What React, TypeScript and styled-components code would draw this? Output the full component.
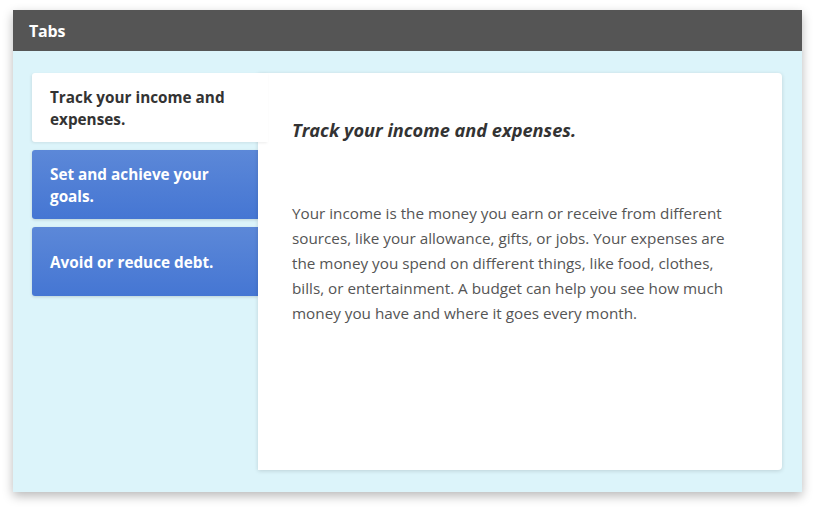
import React, { useState } from "react";
import styled, { createGlobalStyle, css } from "styled-components";

const Global = createGlobalStyle`
  html, body { margin: 0; padding: 0; background: #ffffff; }
  body { font-family: "Open Sans", "Liberation Sans", sans-serif; }
  * { box-sizing: border-box; }
`;

const Page = styled.div`
  padding: 10px 13px 17px 13px;
`;

const Window = styled.div`
  width: 789px;
  height: 482px;
  display: flex;
  flex-direction: column;
  box-shadow: 0 4px 10px rgba(0, 0, 0, 0.28);
`;

const Header = styled.div`
  height: 41px;
  flex: 0 0 41px;
  background: #555555;
  color: #ffffff;
  font-weight: 700;
  font-size: 16px;
  display: flex;
  align-items: center;
  padding-left: 16px;
  letter-spacing: -0.2px;
`;

const Body = styled.div`
  flex: 1;
  background: #dcf4fa;
  padding: 22px 20px 22px 19px;
  display: flex;
`;

const TabList = styled.div`
  width: 226px;
  flex: 0 0 226px;
  display: flex;
  flex-direction: column;
  gap: 8px;
`;

const Tab = styled.button<{ $active: boolean }>`
  height: 69px;
  border: none;
  border-radius: 3px 0 0 3px;
  text-align: left;
  padding: 0 14px 0 18px;
  font-family: "Open Sans", "Liberation Sans", sans-serif;
  font-weight: 700;
  font-size: 15.3px;
  line-height: 22px;
  letter-spacing: 0;
  cursor: pointer;
  display: flex;
  align-items: center;
  ${(p) =>
    p.$active
      ? css`
          background: #ffffff;
          color: #333333;
          width: 236px;
          position: relative;
          z-index: 2;
          box-shadow: -1px 1px 3px rgba(0, 0, 0, 0.08);
        `
      : css`
          background: linear-gradient(#5c88d8, #4576d3);
          color: #ffffff;
          box-shadow: 0 1px 3px rgba(0, 0, 0, 0.15);
        `}
`;

const Panel = styled.div`
  flex: 1;
  background: #ffffff;
  border-radius: 0 4px 4px 0;
  box-shadow: 0 1px 4px rgba(0, 0, 0, 0.14);
  padding: 43px 50px 0 34px;
  position: relative;
  z-index: 1;
`;

const Title = styled.h2`
  margin: 0 0 57px 0;
  font-size: 18.2px;
  line-height: 28px;
  font-style: italic;
  font-weight: 700;
  color: #333333;
  letter-spacing: 0;
`;

const Text = styled.p`
  margin: 0;
  font-size: 15.25px;
  line-height: 25px;
  color: #555555;
  letter-spacing: 0;
`;

const tabs = [
  {
    label: "Track your income and expenses.",
    title: "Track your income and expenses.",
    text:
      "Your income is the money you earn or receive from different sources, like your allowance, gifts, or jobs. Your expenses are the money you spend on different things, like food, clothes, bills, or entertainment. A budget can help you see how much money you have and where it goes every month.",
  },
  {
    label: "Set and achieve your goals.",
    title: "Set and achieve your goals.",
    text:
      "Goals are things you want to save for, like a new bike or a trip. A budget can help you plan how much to save each month and track your progress.",
  },
  {
    label: "Avoid or reduce debt.",
    title: "Avoid or reduce debt.",
    text:
      "Debt is money you owe to someone else. A budget can help you avoid borrowing more than you can pay back and plan how to pay off what you owe.",
  },
];

export default function App() {
  const [active, setActive] = useState(0);
  const cur = tabs[active];
  return (
    <Page>
      <Global />
      <Window>
        <Header>Tabs</Header>
        <Body>
          <TabList>
            {tabs.map((t, i) => (
              <Tab key={i} $active={i === active} onClick={() => setActive(i)}>
                {t.label}
              </Tab>
            ))}
          </TabList>
          <Panel>
            <Title>{cur.title}</Title>
            <Text>{cur.text}</Text>
          </Panel>
        </Body>
      </Window>
    </Page>
  );
}
